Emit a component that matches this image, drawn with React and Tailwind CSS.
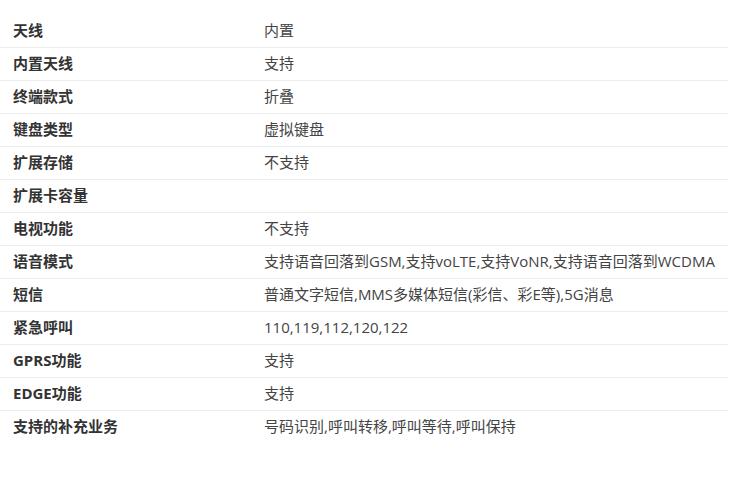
import React from "react";

const specs = [
  ["天线", "内置"],
  ["内置天线", "支持"],
  ["终端款式", "折叠"],
  ["键盘类型", "虚拟键盘"],
  ["扩展存储", "不支持"],
  ["扩展卡容量", ""],
  ["电视功能", "不支持"],
  ["语音模式", "支持语音回落到GSM,支持voLTE,支持VoNR,支持语音回落到WCDMA"],
  ["短信", "普通文字短信,MMS多媒体短信(彩信、彩E等),5G消息"],
  ["紧急呼叫", "110,119,112,120,122"],
  ["GPRS功能", "支持"],
  ["EDGE功能", "支持"],
  ["支持的补充业务", "号码识别,呼叫转移,呼叫等待,呼叫保持"],
];

const SpecRow = ({ label, value, first }) => (
  <div
    className={`flex items-center h-[33px] pb-[2px] ${
      first ? "" : "border-t border-[#ececec]"
    }`}
  >
    <div className="w-[251px] pl-[13px] font-bold text-[#333]">{label}</div>
    <div className="flex-1 pl-[13px] text-[#444]">{value}</div>
  </div>
);

export default function App() {
  return (
    <div
      className="w-[750px] h-[477px] bg-white pt-[14px] text-[15px] leading-5"
      style={{ fontFamily: '"Open Sans", "Noto Sans CJK SC", sans-serif' }}
    >
      <div className="w-[728px] flex flex-col">
        {specs.map(([label, value], i) => (
          <SpecRow key={label} label={label} value={value} first={i === 0} />
        ))}
      </div>
    </div>
  );
}
